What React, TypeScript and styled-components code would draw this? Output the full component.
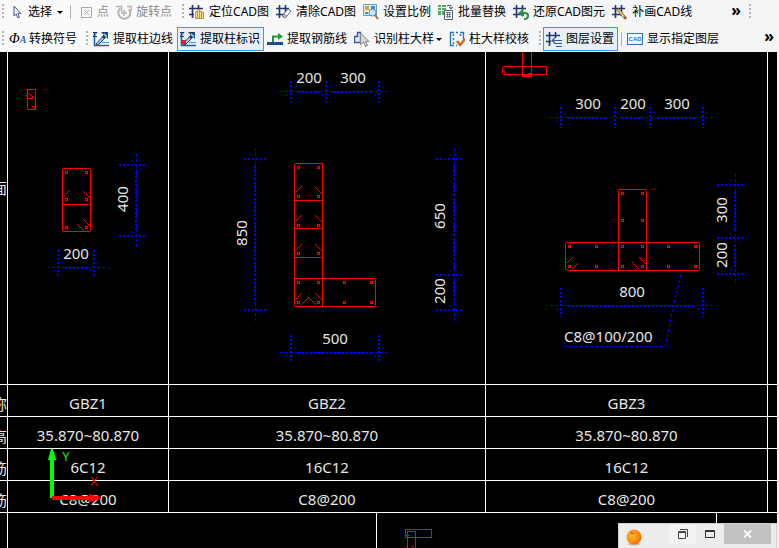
import React from "react";
import styled, { createGlobalStyle, css } from "styled-components";

const GlobalStyle = createGlobalStyle`
  * { box-sizing: border-box; }
  body { margin: 0; background: #f0f0f0; }
  button { font: inherit; color: inherit; }
`;

const BLUE = "#0000ff";
const RED = "#ff0000";
const UI_FONT = '"Noto Sans", "Noto Sans CJK SC", sans-serif';

const Shell = styled.div`
  display: flex;
  flex-direction: column;
  height: 100vh;
  overflow: hidden;
  font: 12px/16px ${UI_FONT};
  color: #000;
`;

const Toolbar = styled.div<{ $tall?: boolean }>`
  display: flex;
  align-items: center;
  flex: none;
  height: ${(p) => (p.$tall ? 28 : 24)}px;
  padding-left: 2px;
  padding-top: ${(p) => (p.$tall ? 2 : 0)}px;
  overflow: hidden;
  white-space: nowrap;
  background: linear-gradient(to right, #fafafa, #f3f4f6);
`;

const Group = styled.div<{ $start?: number }>`
  display: flex;
  align-items: center;
  margin-left: ${(p) => p.$start ?? 0}px;
`;

const Grip = styled.span<{ $gap?: number }>`
  width: 2px;
  height: 16px;
  margin-right: ${(p) => p.$gap ?? 2}px;
  flex: none;
  background: repeating-linear-gradient(to bottom, #b4b4b4 0 2px, transparent 2px 4px);
`;

const Divider = styled.span`
  width: 1px;
  height: 14px;
  margin: 0 2px 0 3px;
  background: #b0b0b0;
`;

const ToolButton = styled.button`
  display: flex;
  align-items: center;
  gap: 4px;
  height: 24px;
  padding: 0 3px 0 2px;
  border: 1px solid transparent;
  background: transparent;
  white-space: nowrap;
  svg { flex: none; }
  &:disabled { color: #8a8a8a; }
  &[aria-pressed="true"] {
    border-color: #3399ff;
    background: #e6f0fa;
  }
`;

const Caret = styled.span<{ $tight?: boolean }>`
  border: 3px solid transparent;
  border-top-color: #000;
  border-bottom-width: 0;
  margin-left: ${(p) => (p.$tight ? -2 : 1)}px;
`;

const More = styled.button<{ $right: number }>`
  align-self: flex-start;
  margin-left: auto;
  margin-right: ${(p) => p.$right}px;
  padding: 0;
  height: 20px;
  border: 0;
  background: transparent;
  font: bold 16px/20px "Noto Sans", sans-serif;
`;

const BarEnd = styled.div`
  display: flex;
  align-items: center;
  width: 30px;
  height: 24px;
  flex: none;
`;

const Canvas = styled.main`
  position: relative;
  flex: 1;
  min-height: 0;
  margin-right: 2px;
  overflow: hidden;
  background: #000;
  color: #e6e6e6;
  font: 15px/20px "Noto Sans", "Noto Sans CJK SC", sans-serif;
`;

const line = css`1px solid #fff`;

const Schedule = styled.table`
  display: block;
  width: 100%;
  border-collapse: collapse;
  tbody { display: block; }
`;

const Row = styled.tr`
  display: grid;
  grid-template-columns: 8px 161fr 317fr 282fr 9px;
  border-bottom: ${line};
`;

const Cell = styled.td`
  min-height: 31px;
  padding: 8px 0 3px;
  border-right: ${line};
  text-align: center;
  &:last-child { border-right: 0; }
`;

const DrawingCell = styled(Cell)`
  padding: 0;
  svg { display: block; width: 100%; height: auto; }
`;

const RowLabel = styled.th<{ $raised?: boolean }>`
  display: flex;
  align-items: center;
  justify-content: flex-end;
  padding: ${(p) => (p.$raised ? "0 0 60px" : "6px 0 0")};
  border-right: ${line};
  overflow: hidden;
  font-weight: 400;
  font-size: 15px;
`;

const NextSheet = styled.div`
  display: grid;
  grid-template-columns: 8px 369fr 340fr 60fr;
  height: 36px;
`;

const SheetColumn = styled.div`
  border-right: ${line};
  &:last-child { border-right: 0; }
  svg { display: block; margin: 16px 0 0 28px; }
`;

const AxisMark = styled.svg`
  position: absolute;
  left: 44px;
  top: 396px;
`;

const MiniWindow = styled.div`
  position: absolute;
  right: 0;
  bottom: 0;
  display: flex;
  align-items: flex-start;
  width: 159px;
  height: 25px;
  padding-right: 5px;
  border: 1px solid #d2d2d2;
  border-bottom: 0;
  background: #ececec;
`;

const WindowIcon = styled.svg`
  margin: 5px auto 0 7px;
`;

const WindowButton = styled.button<{ $kind: "restore" | "maximize" | "close" }>`
  display: flex;
  align-items: center;
  justify-content: center;
  width: ${(p) => (p.$kind === "close" ? 47 : p.$kind === "restore" ? 26 : 28)}px;
  height: 20px;
  padding: 0;
  border: 0;
  background: ${(p) => (p.$kind === "close" ? "#c2c2c2" : p.$kind === "restore" ? "#f3f3f3" : "transparent")};
`;

/* ---------- toolbar icons ---------- */

const navy = "#24346e";

const Icon = ({ children }: { children: React.ReactNode }) => (
  <svg width="16" height="16" viewBox="0 0 16 16" fill="none" aria-hidden="true">
    {children}
  </svg>
);

const Hash = () => <path d="M0 4.5h13M0 10.5h11M3.5 1v13M9.5 1v11" stroke={navy} strokeWidth="1.6" />;

const extractBase = (
  <>
    <path d="M1.5 1v13.5H16" stroke="#215fa0" strokeWidth="1.6" />
    <path d="M0 1.5h4L0 5.5h4" stroke={navy} />
    <path d="M3 13l8-9 2 2-8 8z" fill="#9dd4ec" stroke="#1e3c66" />
    <path d="M8 1h7v7l-2-2-2 2-2-2 2-2z" fill="#243e68" />
    <path d="M11 3l3 3" stroke="#6dc7e6" strokeWidth="2" />
    <path d="M9 11.5h7" stroke="#4e91c8" />
  </>
);

const icons = {
  cursor: (
    <svg width="12" height="16" viewBox="0 0 12 16" aria-hidden="true">
      <path d="M2 2v10l2.2-2 1.6 4 1.600-.8L5.800 9.400h3z" fill="#fff" stroke="#44598a" />
    </svg>
  ),
  point: (
    <svg width="13" height="16" viewBox="0 0 13 16" fill="none" stroke="#a6a6a6" aria-hidden="true">
      <path d="M1.500 3.500h10v10h-10zM4 6l5 5M9 6l-5 5" />
    </svg>
  ),
  rotate: (
    <Icon>
      <path d="M4 4.500A6 6 0 1 0 13 5" stroke="#b4b4b4" strokeWidth="2" />
      <path d="M8 6v6M5 9h6" stroke="#b4b4b4" strokeWidth="1.500" />
      <path d="M0 2.500h5.500V8M15.500 7V2.500H11" stroke="#b4b4b4" strokeWidth="1.500" />
    </Icon>
  ),
  locate: (
    <Icon>
      <path d="M0 4.500h14M0 10.500h5M3.500 1v13M9.500 1v4" stroke={navy} strokeWidth="1.600" />
      <path d="M6.500 14V7.500h2V14M8.500 7V5.500h2V14M10.500 7h2v7M12.500 8h2v6.500h-8" fill="#f4dc8c" stroke="#b7963f" />
    </Icon>
  ),
  clear: (
    <Icon>
      <Hash />
      <path d="M6 12l6-7 3 2-6 7z" fill="#fff" stroke="#5c668e" />
      <path d="M6 12l2-2 3 2-2 2z" fill="#e3a7be" stroke="#5c668e" strokeWidth=".6" />
    </Icon>
  ),
  scale: (
    <Icon>
      <path d="M.5 .5h13v11H.5z" fill="#d8edf8" stroke="#5aa5c9" />
      <path d="M2 2h4v4H2z" fill="#d9a03a" />
      <path d="M8 2h4v3H8z" fill="#3c8cba" />
      <path d="M2 8h3v2H2z" fill="#4c9c55" />
      <circle cx="9.500" cy="8.500" r="3.500" fill="#c9e4f6" stroke="#5f8fb5" />
      <path d="M12 11l3 4" stroke="#a27331" strokeWidth="2" />
    </Icon>
  ),
  batch: (
    <Icon>
      <path d="M0 1h8v10H0z" fill="#5da56e" />
      <path d="M0 3.500h8M0 6.500h8M3.500 1v10" stroke="#d9efdc" />
      <path d="M6.500 6.500h8v9h-8z" fill="#fff" stroke="#52606e" />
      <path d="M8 8.500h5M8 10.500h5M8 12.500h5M9.500 8v6M11.500 8v6" stroke="#74828e" />
      <path d="M9 1.500h4v3M11 3l2 2 2-2" stroke="#52606e" />
    </Icon>
  ),
  restore: (
    <Icon>
      <Hash />
      <path d="M8 9h4q3 0 3 3t-4 3" stroke="#2e8a3f" strokeWidth="2" />
      <path d="M10 5v8L5 9z" fill="#2e8a3f" />
    </Icon>
  ),
  draw: (
    <Icon>
      <Hash />
      <path d="M5 5h2l7 8v2l-2-.5-7-8z" fill="#e5c266" stroke="#80602b" strokeWidth=".8" />
      <path d="M12 12l3 3-3-.5z" fill="#a33" />
    </Icon>
  ),
  extract: <Icon>{extractBase}</Icon>,
  extractMark: (
    <Icon>
      {extractBase}
      <path d="M2 9h4v4H2z" fill="#e02030" />
    </Icon>
  ),
  rebar: (
    <Icon>
      <path d="M0 12.500h16" stroke="#1b4b9b" strokeWidth="3" />
      <path d="M6 11V5.500h6" stroke="#239a35" strokeWidth="2" />
      <path d="M11 2v7l5-3.500z" fill="#239a35" />
    </Icon>
  ),
  identify: (
    <Icon>
      <path d="M.5 11.500v-6h3v-4h3v10z" fill="#e0e9f7" stroke="#3b5ba0" strokeWidth="1.400" />
      <path d="M6.500 2v11.500l3-2.500 2 4.500 2-1-2-4h3.500z" fill="#d6d6d6" stroke="#858585" />
    </Icon>
  ),
  check: (
    <Icon>
      <path d="M5 1.500H1.500v13H5M11 1.500h3.500v7" stroke="#2677b8" strokeWidth="1.400" />
      <path d="M4.500 3v2m0 2v2m0 2v2M11.500 3v2M7 1.500h2M7 14.500h1" stroke="#2677b8" strokeWidth="1.400" />
      <path d="M8 10l3 4 5-6" stroke="#c96c2b" strokeWidth="2.500" />
    </Icon>
  ),
  layers: (
    <Icon>
      <path d="M0 4.500h14M3.500 1v14M9.500 1v6M0 10.500h5" stroke={navy} strokeWidth="1.600" />
      <path d="M6 9.500h10M8 12.500h8M10 15.500h6M9 7L6 9.500l3 2.500" stroke="#315ca3" strokeWidth="1.200" />
    </Icon>
  ),
};

const SymbolIcon = styled.span`
  display: flex;
  align-items: baseline;
  width: 16px;
  font: italic 14px/16px "Liberation Serif", serif;
  b { color: #2464ab; font-size: 10px; }
`;

const CadBadge = styled.span`
  width: 16px;
  height: 12px;
  border: 1px solid #2878bd;
  background: #f0f8ff;
  color: #2878bd;
  font: bold 6px/10px "Liberation Sans", sans-serif;
  text-align: center;
`;

type ToolProps = {
  icon: React.ReactNode;
  label: string;
  menu?: boolean;
  tight?: boolean;
  pressed?: boolean;
  disabled?: boolean;
};

const Tool = ({ icon, label, menu, tight, pressed, disabled }: ToolProps) => (
  <ToolButton type="button" aria-pressed={pressed} disabled={disabled}>
    {icon}
    {label}
    {menu && <Caret $tight={tight} />}
  </ToolButton>
);

/* ---------- drawing primitives, in sheet coordinates ---------- */

const DimText = styled.text`
  fill: #e6e6e6;
  text-anchor: middle;
  font: 15px "Noto Sans", sans-serif;
`;

const NoteText = styled(DimText)`
  text-anchor: start;
`;

type DimProps = { stops: number[]; at: number; from: number; to: number; labels: string[]; labelAt: number };

const HorizontalDim = ({ stops, at, from, to, labels, labelAt }: DimProps) => (
  <g>
    <g stroke={BLUE} fill="none" shapeRendering="crispEdges">
      <path d={`M${stops[0] - 11} ${at + 0.5}H${stops[stops.length - 1] + 11}`} strokeDasharray="3 2" />
      {stops.map((x, i) => (
        <g key={x}>
          <path d={`M${x} ${from}V${to}`} strokeWidth="2" strokeDasharray="2 2" />
          <path d={`M${x - 5} ${at + 5}l2 -2M${x + 3} ${at - 3}l2 -2`} />
          {i > 0 && <path d={`M${stops[i - 1] + 7} ${at + 1}H${x - 7}`} strokeWidth="2" strokeDasharray="2 2" />}
        </g>
      ))}
    </g>
    {labels.map((t, i) => (
      <DimText key={i} x={Math.round((stops[i] + stops[i + 1]) / 2)} y={labelAt}>{t}</DimText>
    ))}
  </g>
);

const VerticalDim = ({ stops, at, from, to, labels, labelAt }: DimProps) => (
  <g>
    <g stroke={BLUE} fill="none" shapeRendering="crispEdges">
      <path d={`M${at + 0.5} ${stops[0] - 11}V${stops[stops.length - 1] + 11}`} strokeDasharray="3 2" />
      {stops.map((y, i) => (
        <g key={y}>
          <path d={`M${from} ${y}H${to}`} strokeWidth="2" strokeDasharray="2 2" />
          <path d={`M${at - 5} ${y - 5}l2 2M${at + 3} ${y + 3}l2 2`} />
          {i > 0 && <path d={`M${at} ${stops[i - 1] + 7}V${y - 7}`} strokeWidth="2" strokeDasharray="2 2" />}
        </g>
      ))}
    </g>
    {labels.map((t, i) => {
      const y = Math.floor((stops[i] + stops[i + 1]) / 2) - 1;
      return (
        <DimText key={i} x={labelAt} y={y} transform={`rotate(-90 ${labelAt} ${y})`}>{t}</DimText>
      );
    })}
  </g>
);

const Outline = ({ d }: { d: string }) => (
  <path d={d} transform="translate(.5 .5)" fill="none" stroke={RED} shapeRendering="crispEdges" />
);

const Bars = ({ at }: { at: [number, number][] }) => (
  <g fill="none" stroke={RED} shapeRendering="crispEdges">
    {at.map(([x, y]) => (
      <rect key={`${x}-${y}`} x={x - 0.5} y={y - 0.5} width="2" height="2" />
    ))}
  </g>
);

const grid = (xs: number[], ys: number[]) => ys.flatMap((y) => xs.map((x): [number, number] => [x, y]));

const RectColumn = () => (
  <svg viewBox="8 52 160 332" role="img" aria-label="GBZ1">
    <Outline d="M27 89h8v20h-8zM25 97l3-4M27 98h5v-2l-2-2M32 106l3 3M34 106l-2 2" />
    <Outline d="M63 168h26l1 1v61l-1 1h-26l-1-1v-61zM62 204h28" />
    <Outline d="M63 196l6-6M83 191l7 7M77 224l7 7M83 219l7 7" />
    <Bars at={grid([66, 86], [172, 199, 227])} />
    <VerticalDim stops={[165, 236]} at={136} from={119} to={145} labels={["400"]} labelAt={128} />
    <HorizontalDim stops={[58, 94]} at={267} from={250} to={276} labels={["200"]} labelAt={259} />
  </svg>
);

const LColumn = () => (
  <svg viewBox="169 52 316 332" role="img" aria-label="GBZ2">
    <HorizontalDim stops={[291, 326, 379]} at={91} from={81} to={102} labels={["200", "300"]} labelAt={83} />
    <VerticalDim stops={[159, 310]} at={255} from={244} to={266} labels={["850"]} labelAt={247} />
    <VerticalDim stops={[159, 275, 310]} at={454} from={436} to={462} labels={["650", "200"]} labelAt={445} />
    <HorizontalDim stops={[291, 379]} at={352} from={335} to={361} labels={["500"]} labelAt={344} />
    <Outline d="M294 163h28v142M294 163v142l1 1h79l1-1v-26l-1-1h-80M294 200h28M294 228h28M294 257h28" />
    <Outline d="M295 192l6-6M315 187l7 7M295 221l6-6M315 215l7 7M295 250l6-6M315 244l7 7M295 299l6-6M315 293l7 7M300 305l8-8l8 8" />
    <Bars at={grid([298, 318], [167, 196, 225, 253, 282, 302])} />
    <Bars at={grid([344, 371], [282, 302])} />
  </svg>
);

const TColumn = () => (
  <svg viewBox="486 52 281 332" role="img" aria-label="GBZ3">
    <Outline d="M503 66h43v8h-43l-1-1v-6zM522 50v26h9v-26M522 75h9M503 73l2-3M528 75v-2h3" />
    <HorizontalDim stops={[561, 615, 650, 703]} at={117} from={107} to={128} labels={["300", "200", "300"]} labelAt={109} />
    <VerticalDim stops={[185, 238, 274]} at={735} from={717} to={746} labels={["300", "200"]} labelAt={727} />
    <HorizontalDim stops={[561, 703]} at={305} from={288} to={317} labels={["800"]} labelAt={297} />
    <Outline d="M618 270v-80l1-1h26l1 1v80M566 242h132l1 1v26l-1 1h-131l-2-2v-25z" />
    <Outline d="M566 263l6-6M571 269l6-6M632 262l7 7M639 257l7 7" />
    <Bars at={grid([622, 642], [193, 220])} />
    <Bars at={grid([569, 596, 622, 642, 668, 695], [246, 266])} />
    <NoteText x="564" y="342">C8@100/200</NoteText>
    <path d="M565 346.500H665L681 273" fill="none" stroke={BLUE} strokeDasharray="3 2" shapeRendering="crispEdges" />
  </svg>
);

const rows = [
  { label: "称", values: ["GBZ1", "GBZ2", "GBZ3"] },
  { label: "高", values: ["35.870~80.870", "35.870~80.870", "35.870~80.870"] },
  { label: "筋", values: ["6C12", "16C12", "16C12"] },
  { label: "筋", values: ["C8@200", "C8@200", "C8@200"] },
];

const AxisText = styled.text`
  font: 13px/13px "Open Sans", sans-serif;
  text-anchor: middle;
`;

export default function App() {
  return (
    <Shell>
      <GlobalStyle />
      <Toolbar role="toolbar" aria-label="CAD">
        <Group>
          <Grip $gap={5} />
          <Tool icon={icons.cursor} label="选择" menu />
          <Divider />
        </Group>
        <Group $start={4}>
          <Tool icon={icons.point} label="点" disabled />
          <Tool icon={icons.rotate} label="旋转点" disabled />
        </Group>
        <Group $start={6}>
          <Grip />
          <Tool icon={icons.locate} label="定位CAD图" />
          <Tool icon={icons.clear} label="清除CAD图" />
          <Tool icon={icons.scale} label="设置比例" />
          <Tool icon={icons.batch} label="批量替换" />
          <Tool icon={icons.restore} label="还原CAD图元" />
          <Tool icon={icons.draw} label="补画CAD线" />
        </Group>
        <More $right={8} type="button" aria-label="更多">»</More>
        <BarEnd><Grip /></BarEnd>
      </Toolbar>
      <Toolbar $tall role="toolbar" aria-label="柱">
        <Group>
          <Grip />
          <Tool icon={<SymbolIcon aria-hidden="true">Φ<b>A</b></SymbolIcon>} label="转换符号" />
        </Group>
        <Group $start={5}>
          <Grip />
          <Tool icon={icons.extract} label="提取柱边线" />
          <Tool icon={icons.extractMark} label="提取柱标识" pressed />
          <Tool icon={icons.rebar} label="提取钢筋线" />
          <Tool icon={icons.identify} label="识别柱大样" menu tight />
          <Tool icon={icons.check} label="柱大样校核" />
        </Group>
        <Group $start={6}>
          <Grip />
          <Tool icon={icons.layers} label="图层设置" pressed />
          <Divider />
          <Tool icon={<CadBadge aria-hidden="true">CAD</CadBadge>} label="显示指定图层" />
        </Group>
        <More $right={5} type="button" aria-label="更多">»</More>
      </Toolbar>
      <Canvas>
        <Schedule>
          <tbody>
            <Row>
              <RowLabel scope="row" $raised>面</RowLabel>
              <DrawingCell><RectColumn /></DrawingCell>
              <DrawingCell><LColumn /></DrawingCell>
              <DrawingCell><TColumn /></DrawingCell>
              <Cell />
            </Row>
            {rows.map((r, i) => (
              <Row key={i}>
                <RowLabel scope="row">{r.label}</RowLabel>
                {r.values.map((v, j) => <Cell key={j}>{v}</Cell>)}
                <Cell />
              </Row>
            ))}
          </tbody>
        </Schedule>
        <NextSheet>
          <SheetColumn />
          <SheetColumn />
          <SheetColumn>
            <svg width="30" height="20" viewBox="405 529 30 20" aria-hidden="true">
              <Outline d="M405 529h26v8h-26zM407 549v-18h8v18M405 535h3M405 547l2-2M411 545l3 3" />
            </svg>
          </SheetColumn>
          <SheetColumn />
        </NextSheet>
        <AxisMark width="64" height="60" viewBox="44 448 64 60" aria-label="XY">
          <path d="M50 498V460h-2L51 449h2l3 11h-2v38z" fill="#00ff00" />
          <path d="M52 496h37v-2l12 3v2l-12 3v-2H52z" fill={RED} />
          <AxisText x="66" y="461" fill="#00ff00">Y</AxisText>
          <AxisText x="94" y="486" fill={RED}>X</AxisText>
        </AxisMark>
        <MiniWindow>
          <WindowIcon width="16" height="18" viewBox="0 0 16 18" aria-hidden="true">
            <defs>
              <radialGradient id="peel" cx=".35" cy=".4" r=".7">
                <stop offset="0" stopColor="#ffb43c" />
                <stop offset=".6" stopColor="#ff8c0a" />
                <stop offset="1" stopColor="#e06a00" />
              </radialGradient>
            </defs>
            <ellipse cx="8" cy="15" rx="6" ry="1.500" fill="#c8b8a8" />
            <circle cx="8" cy="8" r="7.500" fill="url(#peel)" />
            <path d="M5 3l1 2 2-1" stroke="#a06010" fill="none" />
          </WindowIcon>
          <WindowButton $kind="restore" type="button" aria-label="还原">
            <svg width="10" height="10" viewBox="0 0 10 10" fill="none" stroke="#444">
              <path d="M2 .5h7.500V8M.5 2.500h7v7h-7zM.5 3.500h7" />
            </svg>
          </WindowButton>
          <WindowButton $kind="maximize" type="button" aria-label="最大化">
            <svg width="10" height="8" viewBox="0 0 10 8" fill="none" stroke="#333">
              <path d="M.5 .5h9v7h-9zM.5 1.500h9" />
            </svg>
          </WindowButton>
          <WindowButton $kind="close" type="button" aria-label="关闭">
            <svg width="9" height="8" viewBox="0 0 9 8" stroke="#fff" strokeWidth="1.800">
              <path d="M1 .5l7 7M8 .5l-7 7" />
            </svg>
          </WindowButton>
        </MiniWindow>
      </Canvas>
    </Shell>
  );
}
